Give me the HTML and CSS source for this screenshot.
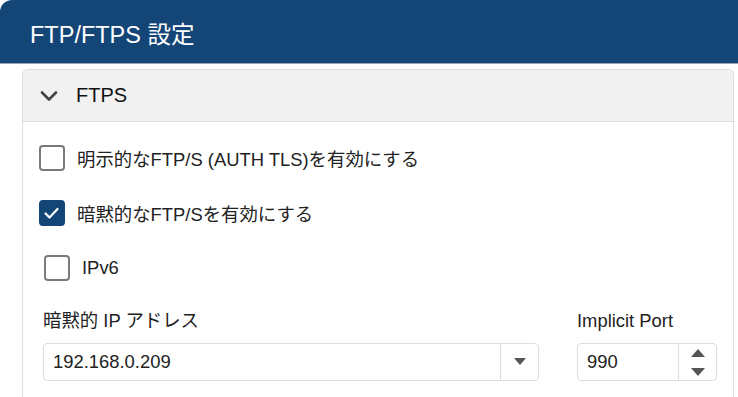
FILE: index.html
```html
<!DOCTYPE html>
<html lang="ja">
<head>
  <meta charset="UTF-8">
  <meta name="viewport" content="width=device-width, initial-scale=1.0">
  <title>FTP/FTPS 設定</title>
  <link rel="stylesheet" href="styles.css">
</head>
<body>

  <div class="page-header">
    <h1>FTP/FTPS 設定</h1>
  </div>

  <div class="panel">
    <div class="panel-heading">
      <svg class="chevron" width="18" height="12" viewBox="0 0 18 12">
        <polyline points="2,2.5 9,9.5 16,2.5" fill="none" stroke="#444" stroke-width="2.6" stroke-linecap="round" stroke-linejoin="round"/>
      </svg>
      <span>FTPS</span>
    </div>

    <div class="panel-body">
      <label class="check-row">
        <span class="box"></span>
        <span>明示的なFTP/S (AUTH TLS)を有効にする</span>
      </label>

      <label class="check-row">
        <span class="box checked">
          <svg width="26" height="26" viewBox="0 0 26 26">
            <polyline points="6.5,13.5 10.5,17.5 18.5,9" fill="none" stroke="#fff" stroke-width="2.2" stroke-linecap="round" stroke-linejoin="round"/>
          </svg>
        </span>
        <span>暗黙的なFTP/Sを有効にする</span>
      </label>

      <label class="check-row indent">
        <span class="box"></span>
        <span>IPv6</span>
      </label>

      <div class="form-row">
        <div class="form-group">
          <div class="field-label">暗黙的 IP アドレス</div>
          <div class="select-box">
            <span class="value">192.168.0.209</span>
            <span class="addon">
              <svg width="12" height="8" viewBox="0 0 12 8"><polygon points="0,0 12,0 6,7" fill="#555"/></svg>
            </span>
          </div>
        </div>
        <div class="form-group">
          <div class="field-label">Implicit Port</div>
          <div class="select-box">
            <span class="value">990</span>
            <span class="addon spinner">
              <svg width="14" height="8" viewBox="0 0 14 8"><polygon points="0,8 14,8 7,0" fill="#555"/></svg>
              <svg width="14" height="8" viewBox="0 0 14 8"><polygon points="0,0 14,0 7,8" fill="#555"/></svg>
            </span>
          </div>
        </div>
      </div>
    </div>
  </div>

</body>
</html>
```

FILE: styles.css
```css
body {
  margin: 0;
  background-color: #ffffff;
  color: #222222;
  font-family: "Liberation Sans", Arial, "Noto Sans CJK JP", sans-serif;
  font-size: 18.4px;
  overflow: hidden;
}

.page-header {
  height: 63px;
  background-color: #134677;
  border-top-left-radius: 12px;
  border-bottom: 1px solid #9aa6b2;
  display: flex;
  align-items: center;
  padding-left: 30px;
}
.page-header h1 {
  margin: 0;
  color: #ffffff;
  font-weight: normal;
  font-size: 23.5px;
  position: relative;
  top: 1px;
}

.panel {
  margin: 5px 4px 0 22px;
  border: 1px solid #dddddd;
  border-bottom: none;
  border-radius: 6px 6px 0 0;
  height: 330px;
}
.panel-heading {
  height: 51px;
  background-color: #f1f1f1;
  border-bottom: 1px solid #dddddd;
  border-radius: 6px 6px 0 0;
  display: flex;
  align-items: center;
  padding-left: 17px;
  font-size: 20px;
  color: #111111;
}
.chevron { margin-right: 18px; margin-top: 1px; }

.panel-body { padding: 23px 16px 0 16px; }

.check-row {
  display: flex;
  align-items: center;
  gap: 12px;
  height: 26px;
  margin-bottom: 29px;
  cursor: pointer;
}
.check-row.indent { margin-left: 5px; margin-bottom: 0; margin-top: 2px; }
.box {
  width: 22px;
  height: 22px;
  border: 2px solid #7a7a7a;
  border-radius: 4px;
  flex: none;
  position: relative;
}
.box.checked {
  background-color: #134677;
  border-color: #134677;
}
.box.checked svg { position: absolute; left: -2px; top: -2px; }

.form-row {
  display: grid;
  grid-template-columns: 1fr 140px;
  gap: 38px;
  margin-top: 28px;
  padding-left: 4px;
}
.field-label {
  height: 24px;
  line-height: 24px;
  margin-bottom: 10px;
}
.select-box {
  height: 36px;
  border: 1px solid #dddddd;
  border-radius: 4px;
  display: flex;
  align-items: center;
}
.select-box .value { flex: 1; padding-left: 9px; }
.addon {
  width: 37px;
  height: 100%;
  border-left: 1px solid #dddddd;
  display: flex;
  align-items: center;
  justify-content: center;
}
.spinner {
  flex-direction: column;
  gap: 11px;
}
```
